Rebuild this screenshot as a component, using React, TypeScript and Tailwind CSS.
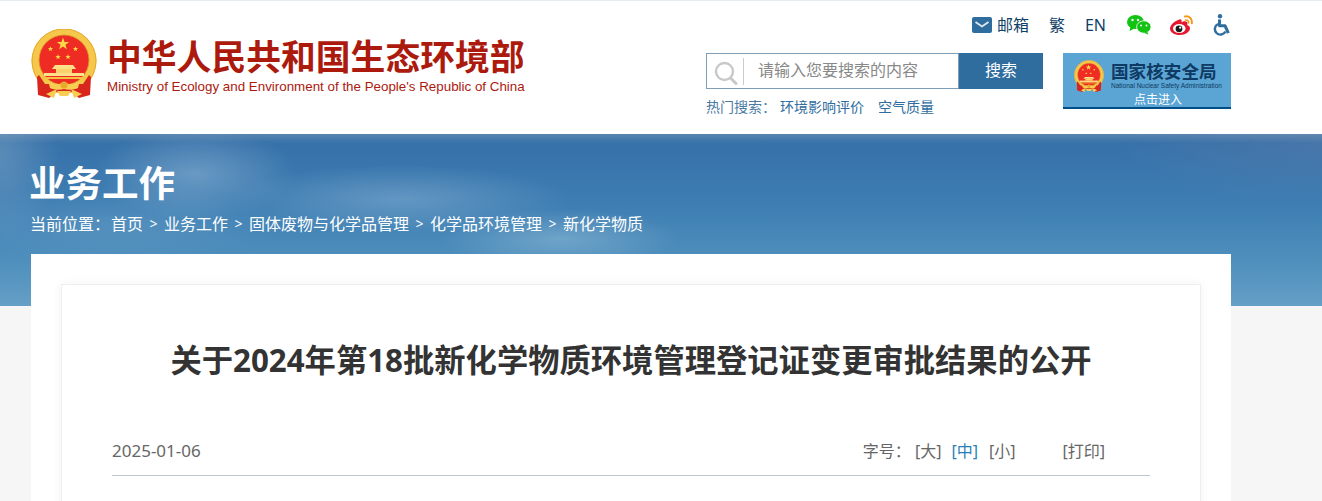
import React from "react";

const cjk = "font-['Noto_Sans','Noto_Sans_CJK_SC',sans-serif]";

function Star({ cx, cy, r }: { cx: number; cy: number; r: number }) {
  const pts: string[] = [];
  for (let i = 0; i < 10; i++) {
    const rad = i % 2 === 0 ? r : r * 0.4;
    const a = ((i * 36 - 90) * Math.PI) / 180;
    pts.push(`${(cx + rad * Math.cos(a)).toFixed(2)},${(cy + rad * Math.sin(a)).toFixed(2)}`);
  }
  return <polygon points={pts.join(" ")} fill="#ffd84a" />;
}

// national emblem, drawn on a 66x70 box
function Emblem({ className }: { className?: string }) {
  return (
    <svg viewBox="0 0 66 70" className={className}>
      <circle cx="33" cy="32" r="32.500" fill="#f5c84c" />
      <circle cx="33" cy="32" r="32" fill="none" stroke="#e3aa32" strokeWidth="1" />
      <circle cx="33" cy="31" r="25" fill="#ee2c24" stroke="#d99a2a" strokeWidth="0.8" />
      <Star cx={32} cy={15} r={6.500} />
      <Star cx={19.500} cy={20} r={2.800} />
      <Star cx={44.500} cy={20} r={2.800} />
      <Star cx={27} cy={28} r={2.800} />
      <Star cx={37} cy={28} r={2.800} />
      <path d="M24 36h18l3 4H21z" fill="#ffe08a" />
      <rect x="25" y="40" width="16" height="4" fill="#f9d36a" />
      <path d="M13 44h40v3H13z" fill="#ffe08a" />
      <path d="M10 48h46v2H10z" fill="#f5c243" />
      <path d="M8 46 L6 48 L7 66 L18 69 L25 63 L41 63 L48 69 L59 66 L60 48 L58 46 L52 55 L14 55Z" fill="#d8261f" />
      <path d="M17 51c5 5 11 5 16 2 5 3 11 3 16-2l-2 8c-4 2-10 2-14 1-4 1-10 1-14-1z" fill="#f7cd52" />
      <circle cx="33" cy="56" r="3.500" fill="#e8a92c" />
      <path d="M15 65l11-5-3 9zM51 65l-11-5 3 9z" fill="#f7cd52" />
      <path d="M26 62h14l-3 5h-8z" fill="#f7cd52" />
    </svg>
  );
}

function MailIcon() {
  return (
    <svg viewBox="0 0 20 16" className="w-5 h-4">
      <rect width="20" height="16" rx="2" fill="#2f6d9e" />
      <path d="M3.500 5 10 9.500 16.500 5" fill="none" stroke="#dfe9f2" strokeWidth="1.800" />
    </svg>
  );
}

function WechatIcon() {
  return (
    <svg viewBox="0 0 24 20" className="w-6 h-5">
      <ellipse cx="8.500" cy="7" rx="8.500" ry="7" fill="#12c312" />
      <path d="M3.500 11.500l-1 4.500 5-2.500z" fill="#12c312" />
      <ellipse cx="16.800" cy="12" rx="7.200" ry="6.200" fill="#12c312" stroke="#fff" strokeWidth="0.800" />
      <path d="M20 16.500l1.500 3.300-4.500-2z" fill="#12c312" />
      <circle cx="5.500" cy="5" r="1.200" fill="#fff" />
      <circle cx="11" cy="5" r="1.200" fill="#fff" />
      <circle cx="14" cy="10.500" r="1" fill="#fff" />
      <circle cx="19.500" cy="10.500" r="1" fill="#fff" />
    </svg>
  );
}

function WeiboIcon() {
  return (
    <svg viewBox="0 0 23 20" className="w-[23px] h-5">
      <path d="M9.500 4.500C4.500 6 0 10 0 13.700c0 3.500 4.500 6.300 9.700 6.300 5.800 0 10.300-3.300 10.300-6.700 0-2-1.600-2.800-2.900-3.200.8-1.700.6-3.300-1.300-3.700-1.600-.3-3.300.3-4.200 1 .4-2.500-.6-3.600-2.100-2.900z" fill="#e6162d" />
      <ellipse cx="9.300" cy="13.500" rx="6.300" ry="4.500" fill="#fff" />
      <circle cx="9" cy="13.800" r="3.400" fill="#1b1b1b" />
      <circle cx="10.200" cy="12.700" r="1.100" fill="#fff" />
      <path d="M15 1.500c4.500-.8 7.500 2.500 6.800 6.800" fill="none" stroke="#f39a1e" strokeWidth="2" strokeLinecap="round" />
      <path d="M15.500 5c2-.3 3.300 1 3 3" fill="none" stroke="#f39a1e" strokeWidth="1.600" strokeLinecap="round" />
    </svg>
  );
}

function AccessIcon() {
  return (
    <svg viewBox="0 0 18 22" className="w-[18px] h-[22px]">
      <circle cx="7" cy="2.200" r="2.200" fill="#2f6d9e" />
      <path d="M6.500 5.500v6.200h5.500l3.300 7.500" fill="none" stroke="#2f6d9e" strokeWidth="3" strokeLinejoin="round" />
      <path d="M5 10a5.600 5.600 0 1 0 7.500 7.500" fill="none" stroke="#2f6d9e" strokeWidth="2.400" />
    </svg>
  );
}

function SearchIcon() {
  return (
    <svg viewBox="0 0 24 24" className="w-[24px] h-[24px]">
      <circle cx="10.500" cy="10.500" r="8.500" fill="none" stroke="#c8c8c8" strokeWidth="2.400" />
      <path d="M16.500 17l5.500 5.500" stroke="#c8c8c8" strokeWidth="3" strokeLinecap="round" />
    </svg>
  );
}

function Header() {
  return (
    <header className="h-[134px] bg-white border-t border-[#e6ebf0] flex justify-between pl-[31px] pr-[91px]">
      <div className="flex items-start pt-[28px]">
        <Emblem className="w-[66px] h-[70px]" />
        <div className="ml-[10px]">
          <div className="font-['Noto_Sans_CJK_SC',sans-serif] text-[34.800px] leading-[40px] font-bold text-[#ac1a0e] mt-[6px] whitespace-nowrap">
            中华人民共和国生态环境部
          </div>
          <div className="font-['Liberation_Sans',sans-serif] text-[13.360px] leading-[16px] text-[#ac1a0e] mt-[4px] whitespace-nowrap">
            Ministry of Ecology and Environment of the People's Republic of China
          </div>
        </div>
      </div>
      <div className="w-[525px] pt-[12px]">
        <div className={`${cjk} flex items-center justify-end h-[24px] text-[16px] text-[#0e3f66]`}>
          <MailIcon />
          <span className="ml-[5px]">邮箱</span>
          <span className="ml-[20px]">繁</span>
          <span className="ml-[20px]">EN</span>
          <span className="ml-[21px]"><WechatIcon /></span>
          <span className="ml-[19px]"><WeiboIcon /></span>
          <span className="ml-[20px]"><AccessIcon /></span>
        </div>
        <div className="flex mt-[16px]">
          <div className="w-[337px]">
            <div className="flex h-[36px]">
              <div className="flex-1 flex items-center border border-[#7f9eb8] bg-white">
                <span className="ml-[7px] mt-[4px]"><SearchIcon /></span>
                <span className="ml-[5px] w-px h-[27px] bg-[#cccccc]" />
                <span className={`${cjk} ml-[14px] mb-[2px] text-[16px] text-[#888888]`}>请输入您要搜索的内容</span>
              </div>
              <div className={`${cjk} w-[84px] bg-[#2f6d9e] text-white text-[16px] pb-[2px] flex items-center justify-center`}>搜索</div>
            </div>
            <div className={`${cjk} flex text-[14px] leading-[20px] mt-[8px] text-[#2f6d9e]`}>
              <span className="text-[#4a7ba3] w-[74px]">热门搜索：</span>
              <span>环境影响评价</span>
              <span className="ml-[14px]">空气质量</span>
            </div>
          </div>
          <div className="ml-[20px] w-[168px] h-[56px] bg-[#5ba5d4] border-b-[2px] border-[#004d86] flex relative">
            <Emblem className="w-[30px] h-[33px] ml-[11px] mt-[7px]" />
            <div className="ml-[7px] mt-[7px]">
              <div className="font-['Noto_Sans_CJK_SC',sans-serif] text-[17.600px] leading-[22px] font-bold text-[#0e3a63] whitespace-nowrap">国家核安全局</div>
              <div className="font-['Liberation_Sans',sans-serif] text-[6.500px] leading-[8px] text-[#0e3a63] whitespace-nowrap">National Nuclear Safety Administration</div>
            </div>
            <div className={`${cjk} absolute left-[71px] bottom-0 text-[12px] leading-[14px] text-white`}>点击进入</div>
          </div>
        </div>
      </div>
    </header>
  );
}

function Banner() {
  const items = ["首页", "业务工作", "固体废物与化学品管理", "化学品环境管理", "新化学物质"];
  return (
    <section className="h-[172px] pl-[30px] pt-[24px] text-white bg-[linear-gradient(180deg,rgba(150,170,190,0.35)_0px,transparent_9px),radial-gradient(ellipse_100px_46px_at_195px_40px,rgba(170,200,225,0.42),transparent),radial-gradient(ellipse_60px_90px_at_0px_20px,rgba(170,195,215,0.3),transparent),radial-gradient(ellipse_170px_34px_at_400px_65px,rgba(170,200,225,0.35),transparent),radial-gradient(ellipse_120px_30px_at_560px_105px,rgba(170,205,225,0.4),transparent),radial-gradient(ellipse_160px_40px_at_120px_90px,rgba(150,190,220,0.2),transparent),radial-gradient(ellipse_200px_60px_at_1322px_10px,rgba(120,130,170,0.25),transparent),linear-gradient(180deg,#3670a8_0%,#3d7db2_40%,#4f90bd_75%,#659fc6_100%)]">
      <h1 className={`${cjk} text-[36.500px] leading-[50px] font-bold -ml-px`}>业务工作</h1>
      <div className={`${cjk} flex items-center text-[16px] leading-[22px] mt-[5px]`}>
        <span className="mr-[1px]">当前位置：</span>
        {items.map((it, i) => (
          <React.Fragment key={it}>
            {i > 0 && <span className="w-[21px] text-center text-[14px]">&gt;</span>}
            <span>{it}</span>
          </React.Fragment>
        ))}
      </div>
    </section>
  );
}

export default function App() {
  return (
    <div className={`${cjk} h-[501px] overflow-hidden bg-[#f6f6f6]`}>
      <Header />
      <Banner />
      <main className="relative z-10 -mt-[52px] mx-[31px] w-[1200px] bg-white pt-[30px] px-[30px] h-[300px]">
        <article className="w-[1140px] h-[300px] bg-white border border-[#eeeeee] shadow-[0_0_10px_rgba(0,0,0,0.06)] px-[50px]">
          <h2 className={`${cjk} text-[31.300px] leading-[44px] font-bold text-[#333333] text-center mt-[53px] whitespace-nowrap`}>
            关于2024年第18批新化学物质环境管理登记证变更审批结果的公开
          </h2>
          <div className="mt-[46px] h-[48px] pt-[11px] flex justify-between items-start border-b border-[#bcc6cc] text-[16px] leading-[24px] text-[#666666]">
            <span className="text-[17px]">2025-01-06</span>
            <div className="flex pr-[45px]">
              <span>字号：</span>
              <span className="ml-[4px]">[大]</span>
              <span className="ml-[10px] text-[#2a7fb8]">[中]</span>
              <span className="ml-[11px]">[小]</span>
              <span className="ml-[47px]">[打印]</span>
            </div>
          </div>
        </article>
      </main>
    </div>
  );
}
